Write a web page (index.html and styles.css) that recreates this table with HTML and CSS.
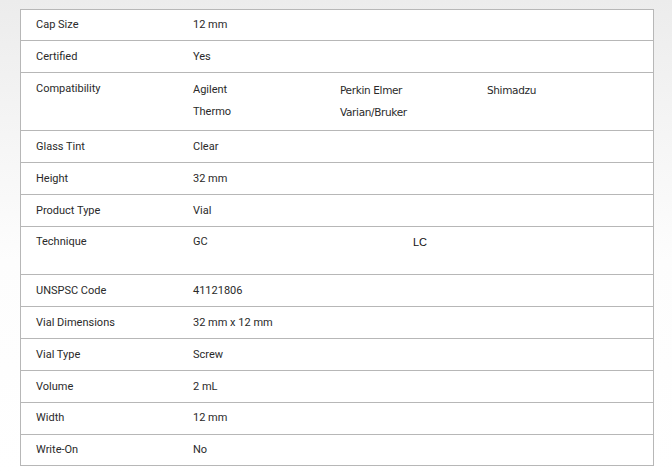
FILE: index.html
```html
<!DOCTYPE html>
<html>
<head>
<meta charset="utf-8">
<link rel="stylesheet" href="styles.css">
</head>
<body>
<div class="page">
  <div class="specs">
    <div class="row row-first"><div class="label">Cap Size</div><div class="value">12 mm</div></div>
    <div class="row"><div class="label">Certified</div><div class="value">Yes</div></div>
    <div class="row row-list row-compat">
      <div class="label">Compatibility</div>
      <div class="value list list-3">
        <span>Agilent</span><span class="alt">Perkin Elmer</span><span class="alt">Shimadzu</span>
        <span>Thermo</span><span class="alt">Varian/Bruker</span>
      </div>
    </div>
    <div class="row"><div class="label">Glass Tint</div><div class="value">Clear</div></div>
    <div class="row"><div class="label">Height</div><div class="value">32 mm</div></div>
    <div class="row"><div class="label">Product Type</div><div class="value">Vial</div></div>
    <div class="row row-list row-tech">
      <div class="label">Technique</div>
      <div class="value list list-2">
        <span>GC</span><span class="alt2">LC</span>
      </div>
    </div>
    <div class="row"><div class="label">UNSPSC Code</div><div class="value">41121806</div></div>
    <div class="row"><div class="label">Vial Dimensions</div><div class="value">32 mm x 12 mm</div></div>
    <div class="row"><div class="label">Vial Type</div><div class="value">Screw</div></div>
    <div class="row"><div class="label">Volume</div><div class="value">2 mL</div></div>
    <div class="row row-tail"><div class="label">Width</div><div class="value">12 mm</div></div>
    <div class="row row-last"><div class="label">Write-On</div><div class="value">No</div></div>
  </div>
</div>
</body>
</html>
```

FILE: styles.css
```css
html, body {
  margin: 0;
  padding: 0;
}
body {
  width: 672px;
  height: 474px;
  overflow: hidden;
  background: linear-gradient(180deg, #ececec 0, #f4f4f4 25%, #fdfdfd 55%, #ffffff 100%);
  font-family: Roboto, "Liberation Sans", Arial, sans-serif;
  font-size: 11px;
  color: #2a2a2a;
}
.page {
  padding: 9px 0 0 20px;
}
.specs {
  width: 634px;
  box-sizing: border-box;
  background: #fff;
  border: 1px solid #b7b7b7;
  border-bottom: none;
}
.row {
  display: grid;
  grid-template-columns: 157px 1fr;
  align-content: start;
  padding-left: 15px;
  height: 32px;
  box-sizing: border-box;
  border-bottom: 1px solid #b7b7b7;
}
.label, .value {
  padding-top: 8px;
  line-height: 16px;
}
.row-first { height: 31px; }
.row-first .label, .row-first .value { padding-top: 7px; }
.row-tail .label, .row-tail .value { padding-top: 7px; }
.row-last { height: 31px; }
.row-last .label, .row-last .value { padding-top: 7px; }
.row-compat { height: 58px; }
.row-tech { height: 48px; }
.row-compat .label { padding-top: 8px; }
.row-tech .label { padding-top: 7px; }
.list {
  display: grid;
  align-content: start;
  line-height: 22px;
}
.row-compat .list { padding-top: 6px; }
.row-tech .list { padding-top: 4px; }
.list-3 { grid-template-columns: repeat(3, 147px); }
.list-2 { grid-template-columns: repeat(2, 220px); }
.alt {
  font-family: "DejaVu Sans", sans-serif;
  font-size: 10.5px;
  letter-spacing: -0.35px;
}
.alt2 {
  font-family: "Liberation Sans", Arial, sans-serif;
  color: #111;
}
```
